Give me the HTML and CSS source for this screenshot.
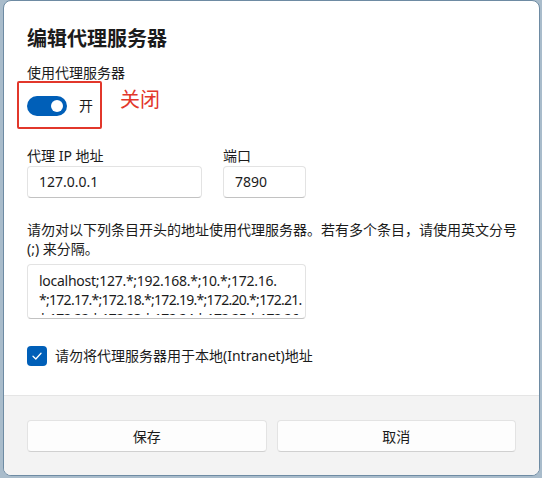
FILE: index.html
```html
<!DOCTYPE html>
<html lang="zh-CN">
<head>
  <meta charset="UTF-8">
  <meta name="viewport" content="width=device-width, initial-scale=1.0">
  <title>编辑代理服务器</title>
  <link rel="stylesheet" href="styles.css">
</head>
<body>
  <!-- Proxy dialog -->
  <div class="dialog">
    <div class="dialog-body">
      <h1 class="dialog-title">编辑代理服务器</h1>

      <div class="field-label">使用代理服务器</div>
      <div class="toggle-row">
        <span class="toggle on"><span class="toggle-knob"></span></span>
        <span class="toggle-text">开</span>
        <span class="mark-box"></span>
        <span class="mark-note">关闭</span>
      </div>

      <div class="address-row">
        <div class="field ip-field">
          <div class="field-label">代理 IP 地址</div>
          <div class="text-input">127.0.0.1</div>
        </div>
        <div class="field port-field">
          <div class="field-label">端口</div>
          <div class="text-input">7890</div>
        </div>
      </div>

      <p class="hint">请勿对以下列条目开头的地址使用代理服务器。若有多个条目，请使用英文分号 (;) 来分隔。</p>

      <div class="multi-input">
        <div class="multi-scroll">
          <span>localhost;127.*;192.168.*;10.*;172.16.</span>
          <span class="dense">*;172.17.*;172.18.*;172.19.*;172.20.*;172.21.</span>
          <span class="dense">*;172.22.*;172.23.*;172.24.*;172.25.*;172.26.</span>
        </div>
      </div>

      <label class="check-row">
        <span class="checkbox">
          <svg width="12" height="12" viewBox="0 0 12 12"><path d="M2 6.3 L4.8 9 L10 3.3" fill="none" stroke="#fff" stroke-width="1.3" stroke-linecap="round" stroke-linejoin="round"/></svg>
        </span>
        <span>请勿将代理服务器用于本地(Intranet)地址</span>
      </label>
    </div>

    <div class="dialog-footer">
      <button class="btn">保存</button>
      <button class="btn">取消</button>
    </div>
  </div>
</body>
</html>
```

FILE: styles.css
```css
/* Base */
:root {
  --accent: #005fb8;
  --text: #1b1b1b;
  --border: #e3e3e3;
  --border-strong: #c2c2c2;
  --footer: #f3f3f3;
  --mark: #e2372b;
}

* {
  margin: 0;
  padding: 0;
  box-sizing: border-box;
}

body {
  background-color: #a9bccb;
  font-family: "Noto Sans", "Noto Sans CJK SC", sans-serif;
  font-size: 14px;
  color: var(--text);
  overflow: hidden;
}

/* Dialog shell */
.dialog {
  width: 537px;
  height: 476px;
  margin-left: 3px;
  background-color: #ffffff;
  border: 1px solid #6e8ba3;
  border-radius: 8px;
  overflow: hidden;
  display: flex;
  flex-direction: column;
}

.dialog-body {
  flex: 1;
  padding: 24px 23px 0;
}

.dialog-title {
  font-size: 20px;
  font-weight: 600;
  line-height: 28px;
}

.field-label {
  line-height: 20px;
  margin-top: 10px;
}

/* Toggle */
.toggle-row {
  position: relative;
  display: flex;
  align-items: center;
  height: 32px;
  margin-top: 7px;
}

.toggle {
  position: relative;
  width: 40px;
  height: 20px;
  border-radius: 10px;
  background-color: var(--accent);
}

.toggle-knob {
  position: absolute;
  top: 4px;
  right: 4px;
  width: 12px;
  height: 12px;
  border-radius: 50%;
  background-color: #ffffff;
}

.toggle-text {
  margin-left: 12px;
  line-height: 20px;
}

/* red annotation around the switch */
.mark-box {
  position: absolute;
  left: -10px;
  top: -9px;
  width: 85px;
  height: 48px;
  border: 2px solid var(--mark);
  border-radius: 2px;
}

.mark-note {
  position: absolute;
  left: 93px;
  top: -4px;
  font-size: 20px;
  line-height: 28px;
  color: var(--mark);
}

/* Address + port */
.address-row {
  display: flex;
  gap: 21px;
  margin-top: 24px;
}

.ip-field {
  width: 175px;
}

.port-field {
  width: 83px;
}

.text-input {
  height: 32px;
  padding: 0 11px;
  line-height: 30px;
  border: 1px solid var(--border);
  border-bottom-color: var(--border-strong);
  border-radius: 4px;
  background-color: #ffffff;
}

.address-row .field-label {
  margin-top: 0;
}

.hint {
  margin-top: 22px;
  margin-right: -6px;
  line-height: 19px;
}

/* Exclusion list */
.multi-input {
  width: 279px;
  height: 55px;
  margin-top: 6px;
  padding: 6px 3px 3px 11px;
  border: 1px solid var(--border);
  border-bottom-color: var(--border-strong);
  border-radius: 4px;
}

.multi-scroll {
  height: 44px;
  overflow: hidden;
  line-height: 19px;
  letter-spacing: -0.27px;
}

.multi-scroll span {
  display: block;
  white-space: nowrap;
}

.multi-scroll .dense {
  letter-spacing: -0.72px;
}

/* Checkbox */
.check-row {
  display: flex;
  align-items: center;
  gap: 8px;
  margin-top: 27px;
  line-height: 20px;
}

.checkbox {
  width: 20px;
  height: 20px;
  border-radius: 4px;
  background-color: var(--accent);
  display: flex;
  align-items: center;
  justify-content: center;
}

/* Footer */
.dialog-footer {
  height: 80px;
  padding: 24px 23px 0;
  background-color: var(--footer);
  border-top: 1px solid #e5e5e5;
  display: flex;
  gap: 10px;
}

.btn {
  flex: 1;
  height: 32px;
  font-family: inherit;
  font-size: 14px;
  color: var(--text);
  background-color: #fdfdfd;
  border: 1px solid var(--border);
  border-bottom-color: #d0d0d0;
  border-radius: 4px;
}
```
